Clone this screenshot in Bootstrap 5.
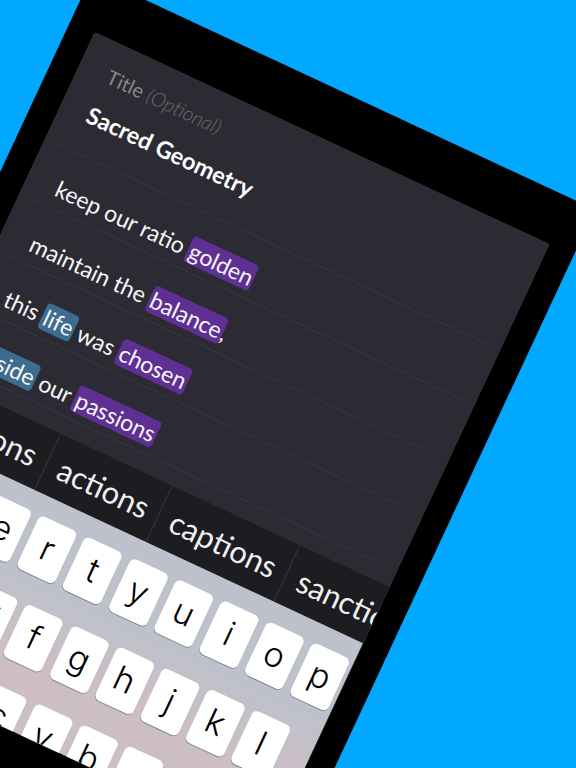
<!doctype html>
<html lang="en">
<head>
<meta charset="utf-8">
<title>Sacred Geometry</title>
<link rel="stylesheet" href="https://cdn.jsdelivr.net/npm/bootstrap@5.3.0/dist/css/bootstrap.min.css">
<style>
html,body{height:100%;}
body{background:#00a8ff;overflow:hidden;font-family:"Lato","Liberation Sans",sans-serif;}
.tablet{position:absolute;left:92.1px;top:-24.6px;width:555px;height:770px;padding:51px 27px;background:#000;transform:rotate(25deg);transform-origin:0 0;}
.tablet-screen{width:501px;height:668px;background:#2c2b33;overflow:hidden;border-radius:2px;box-shadow:0 0 0 .5px #3b3b3d;}
.lyrics{height:378px;}
.title-row{height:117px;margin:0 14px;padding:21px 14px 0;border-bottom:1px solid #38373f;}
.title-hint{font-size:20px;line-height:24px;color:#86858b;padding-left:2px;}
.title-hint em{font-weight:300;color:#6b6a72;}
.title-value{font-size:23.5px;line-height:30px;font-weight:700;color:#fff;margin-top:16px;}
.lyric-row{height:61px;margin:0 14px;padding:0 14px 8px 17px;border-bottom:1px solid #38373f;color:#f6f6f7;font-size:23px;line-height:25px;font-weight:400;white-space:nowrap;}
.word-rhyme{background:#5e3093;border-radius:4px;padding:0 2px;margin:0 -1px;}
.word-slant{background:#3d6c8e;border-radius:4px;padding:0 2px;margin:0 -1px;}
.suggest-bar{height:62px;background:#1c1c21;overflow:hidden;color:#f0f0f2;font-size:31px;white-space:nowrap;}
.suggest-cell{flex:none;padding:0 12px 0 13px;border-left:1px solid #35353a;line-height:62px;}
.suggest-cell:first-child{border-left:0;}
.key-pad{height:228px;padding-top:20px;background:linear-gradient(180deg,#bdc1cb 0,#bdc1cb 36%,#cdbdc5 68%,#cdbdc5 100%);gap:28px;}
.key-line{gap:8.1px;}
.key-cap{flex:none;width:42px;height:58px;background:#fff;border-radius:6px;box-shadow:0 1px 0 #85878e;color:#000;font-family:"Inter","Liberation Sans",sans-serif;font-size:34px;font-weight:300;line-height:56px;text-align:center;}
</style>
</head>
<body>
<div class="tablet">
  <div class="tablet-screen d-flex flex-column">
    <div class="lyrics">
      <div class="title-row">
        <div class="title-hint">Title <em>(Optional)</em></div>
        <div class="title-value">Sacred Geometry</div>
      </div>
      <div class="lyric-row d-flex align-items-end"><span>keep our ratio <span class="word-rhyme">golden</span></span></div>
      <div class="lyric-row d-flex align-items-end"><span>maintain the <span class="word-rhyme">balance</span>,</span></div>
      <div class="lyric-row d-flex align-items-end"><span>this <span class="word-slant">life</span> was <span class="word-rhyme">chosen</span></span></div>
      <div class="lyric-row d-flex align-items-end"><span><span class="word-slant">inside</span> our <span class="word-rhyme">passions</span></span></div>
    </div>
    <div class="suggest-bar d-flex">
      <div class="suggest-cell">fashions</div>
      <div class="suggest-cell">actions</div>
      <div class="suggest-cell">captions</div>
      <div class="suggest-cell">sanctions</div>
    </div>
    <div class="key-pad d-flex flex-column">
      <div class="key-line d-flex justify-content-center"><span class="key-cap">q</span><span class="key-cap">w</span><span class="key-cap">e</span><span class="key-cap">r</span><span class="key-cap">t</span><span class="key-cap">y</span><span class="key-cap">u</span><span class="key-cap">i</span><span class="key-cap">o</span><span class="key-cap">p</span></div>
      <div class="key-line d-flex justify-content-center"><span class="key-cap">a</span><span class="key-cap">s</span><span class="key-cap">d</span><span class="key-cap">f</span><span class="key-cap">g</span><span class="key-cap">h</span><span class="key-cap">j</span><span class="key-cap">k</span><span class="key-cap">l</span></div>
      <div class="key-line d-flex justify-content-center"><span class="key-cap">z</span><span class="key-cap">x</span><span class="key-cap">c</span><span class="key-cap">v</span><span class="key-cap">b</span><span class="key-cap">n</span><span class="key-cap">m</span></div>
    </div>
  </div>
</div>
<script src="https://cdn.jsdelivr.net/npm/bootstrap@5.3.0/dist/js/bootstrap.bundle.min.js"></script>
</body>
</html>
